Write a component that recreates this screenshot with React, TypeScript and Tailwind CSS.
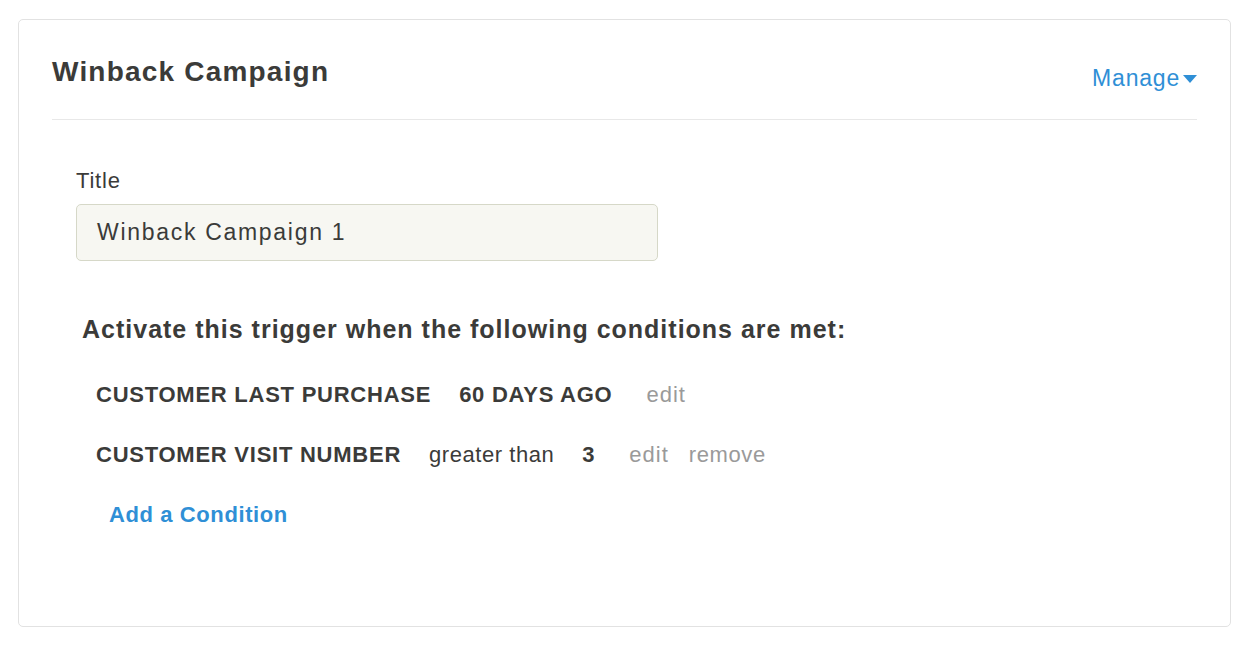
export default function App() {
  return (
    <div className="min-h-screen bg-white pl-[18px] pt-[19px] font-['Liberation_Sans',Arial,sans-serif] text-[#3b3b39]">
      <div className="h-[608px] w-[1213px] rounded-[5px] border border-[#e2e2e2] bg-white px-[33px]">
        <div className="flex items-end justify-between border-b border-[#e8e8e8] pb-[29px] pt-[34px]">
          <h1 className="text-[28px] font-bold leading-[36px] tracking-[1.2px]">Winback Campaign</h1>
          <button className="mb-[-2px] flex items-center gap-[3px] text-[23px] leading-[28px] tracking-[0.8px] text-[#2f8fd6]">
            Manage
            <svg width="14" height="8" viewBox="0 0 14 8" className="mt-[2px]">
              <path d="M0 0h14L7 8z" fill="#2f8fd6" />
            </svg>
          </button>
        </div>

        <div className="pl-[24px] pt-[49px]">
          <label className="block text-[22px] leading-[24px] tracking-[0.8px]">Title</label>
          <div className="mt-[11px] flex h-[57px] w-[582px] items-center rounded-[5px] border border-[#d6d8c8] bg-[#f7f7f2] px-[20px] text-[23px] tracking-[1.7px]">
            Winback Campaign 1
          </div>
        </div>

        <div className="pl-[30px] pt-[53px]">
          <h2 className="text-[25px] font-bold leading-[30px] tracking-[1px]">
            Activate this trigger when the following conditions are met:
          </h2>
          <div className="mt-[38px] flex flex-col gap-[34px] pl-[14px] text-[22px] leading-[26px] tracking-[0.75px]">
            <div className="flex items-center">
              <span className="font-bold">CUSTOMER LAST PURCHASE</span>
              <span className="ml-[28px] font-bold">60 DAYS AGO</span>
              <button className="ml-[34px] tracking-[1px] text-[#9a9a9a]">edit</button>
            </div>
            <div className="flex items-center">
              <span className="font-bold">CUSTOMER VISIT NUMBER</span>
              <span className="ml-[28px] tracking-[0.55px]">greater than</span>
              <span className="ml-[28px] font-bold">3</span>
              <button className="ml-[34px] tracking-[1px] text-[#9a9a9a]">edit</button>
              <button className="ml-[20px] tracking-[0.6px] text-[#9a9a9a]">remove</button>
            </div>
            <button className="self-start pl-[13px] font-bold tracking-[0.6px] text-[#2f8fd6]">Add a Condition</button>
          </div>
        </div>
      </div>
    </div>
  );
}
